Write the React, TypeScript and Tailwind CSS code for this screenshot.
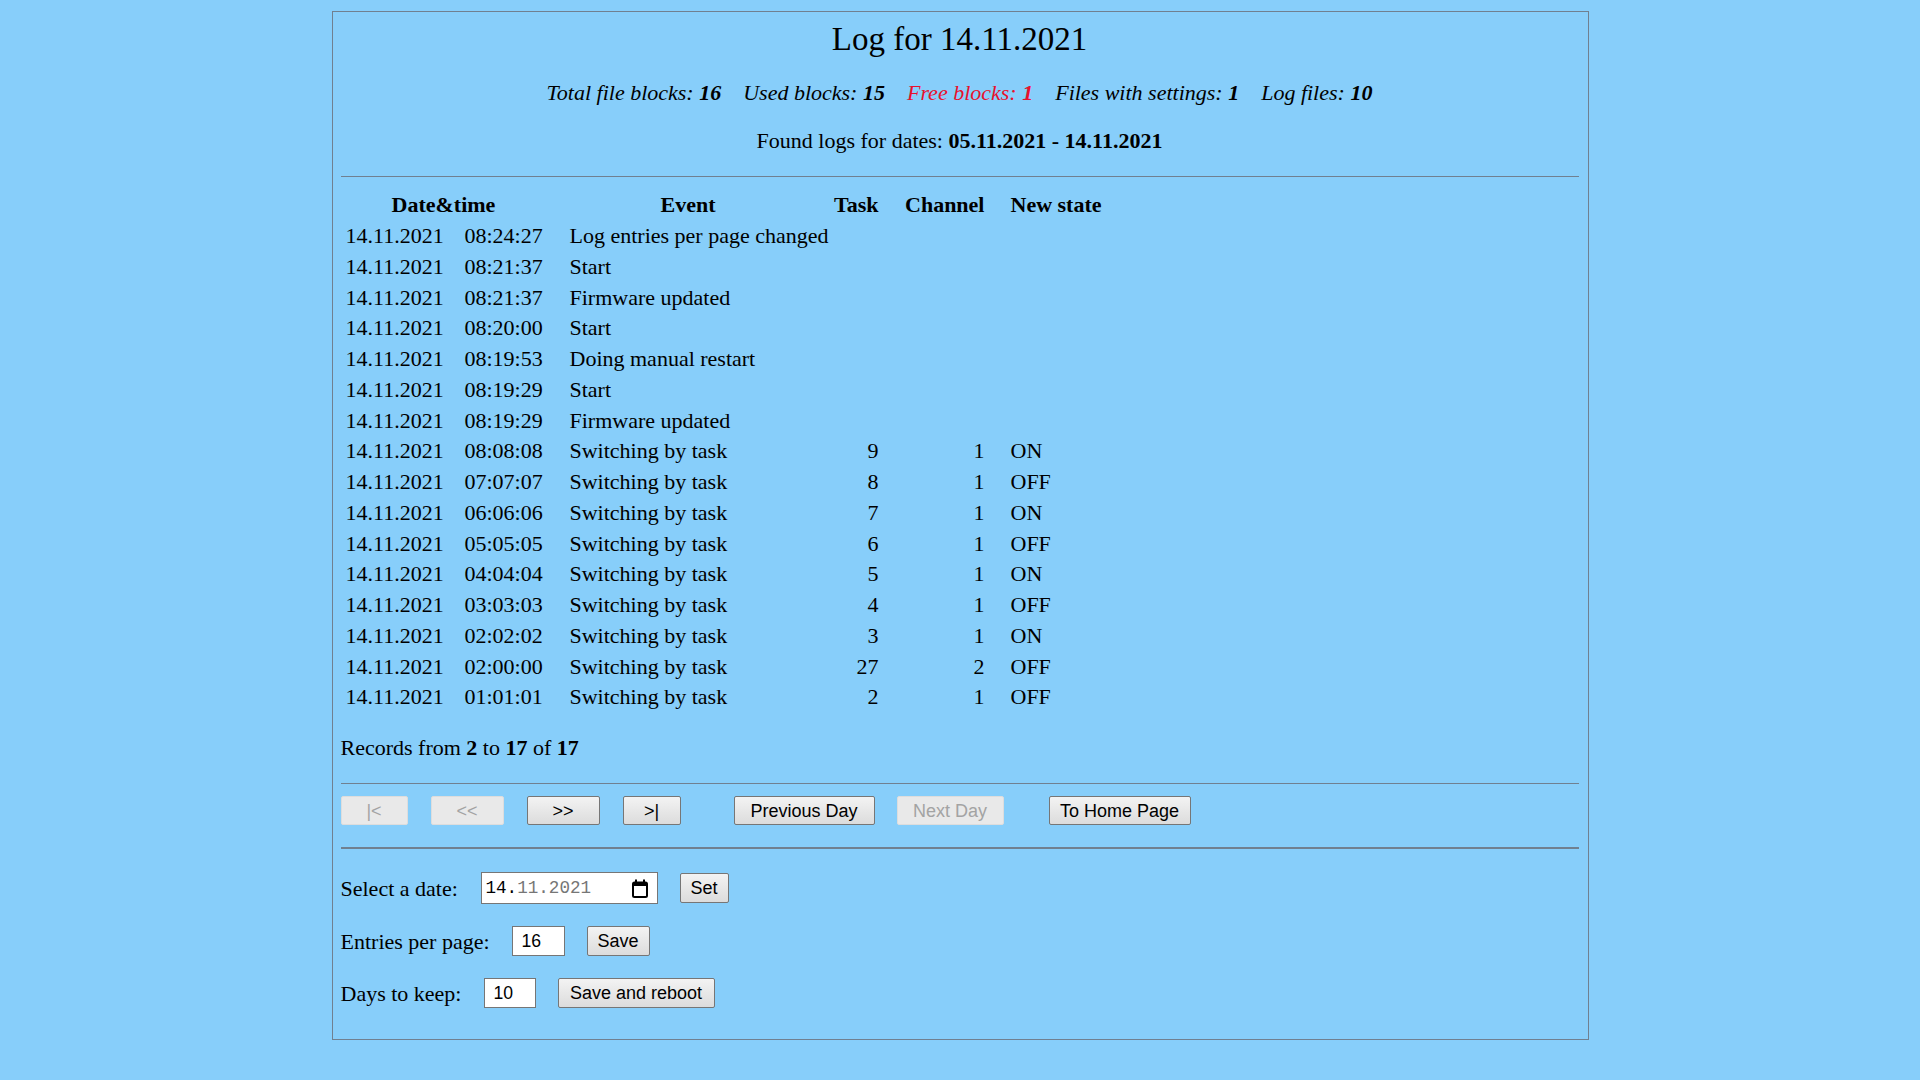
import React from "react";

const rows: [string, string, string, string, string, string][] = [
  ["14.11.2021", "08:24:27", "Log entries per page changed", "", "", ""],
  ["14.11.2021", "08:21:37", "Start", "", "", ""],
  ["14.11.2021", "08:21:37", "Firmware updated", "", "", ""],
  ["14.11.2021", "08:20:00", "Start", "", "", ""],
  ["14.11.2021", "08:19:53", "Doing manual restart", "", "", ""],
  ["14.11.2021", "08:19:29", "Start", "", "", ""],
  ["14.11.2021", "08:19:29", "Firmware updated", "", "", ""],
  ["14.11.2021", "08:08:08", "Switching by task", "9", "1", "ON"],
  ["14.11.2021", "07:07:07", "Switching by task", "8", "1", "OFF"],
  ["14.11.2021", "06:06:06", "Switching by task", "7", "1", "ON"],
  ["14.11.2021", "05:05:05", "Switching by task", "6", "1", "OFF"],
  ["14.11.2021", "04:04:04", "Switching by task", "5", "1", "ON"],
  ["14.11.2021", "03:03:03", "Switching by task", "4", "1", "OFF"],
  ["14.11.2021", "02:02:02", "Switching by task", "3", "1", "ON"],
  ["14.11.2021", "02:00:00", "Switching by task", "27", "2", "OFF"],
  ["14.11.2021", "01:01:01", "Switching by task", "2", "1", "OFF"],
];

const btnBase =
  "flex items-center justify-center shrink-0 rounded-[2px] border font-['Liberation_Sans',Arial,sans-serif] text-[18px] leading-none";
const btnOn =
  btnBase + " border-[#767676] bg-linear-to-b from-[#f3f3f3] to-[#dcdcdc] text-black";
const btnOff = btnBase + " border-[#dddddd] bg-[#e9e9e9] text-[#a3a3a3]";

function CalendarIcon() {
  return (
    <svg width="16" height="19" viewBox="0 0 16 19" aria-hidden="true">
      <rect x="1" y="3.5" width="14" height="14.5" rx="1.5" fill="none" stroke="#000" strokeWidth="2" />
      <rect x="1" y="3" width="14" height="4" fill="#000" />
      <rect x="3" y="0.5" width="2" height="3" fill="#000" />
      <rect x="11" y="0.5" width="2" height="3" fill="#000" />
    </svg>
  );
}

export default function App() {
  return (
    <div className="min-h-screen bg-[#87cefa] pt-[11px] font-['Liberation_Serif','Times_New_Roman',serif] text-black">
      <div className="mx-auto w-[1257px] border border-[#708090] pl-[8px] pr-[9px] pb-[31px]">
        <h1 className="mt-[8px] text-center text-[33px] leading-[38px] font-normal">Log for 14.11.2021</h1>

        <div className="mt-[22px] flex justify-center gap-[22px] text-[22px] leading-[25px] italic">
          <span>
            Total file blocks: <b>16</b>
          </span>
          <span>
            Used blocks: <b>15</b>
          </span>
          <span className="text-[#e8112d]">
            Free blocks: <b>1</b>
          </span>
          <span>
            Files with settings: <b>1</b>
          </span>
          <span>
            Log files: <b>10</b>
          </span>
        </div>

        <div className="mt-[23px] text-center text-[22px] leading-[25px]">
          Found logs for dates: <b>05.11.2021 - 14.11.2021</b>
        </div>

        <div className="mt-[23px] h-px bg-[#708090]" />

        <div className="mt-[11px] grid grid-cols-[118px_107px_265px_48px_106px_1fr] text-[22px]">
          <div className="col-span-2 h-[33px] pl-[51px] font-bold leading-[33px]">Date&amp;time</div>
          <div className="h-[33px] pl-[95px] font-bold leading-[33px]">Event</div>
          <div className="h-[33px] text-right font-bold leading-[33px]">Task</div>
          <div className="h-[33px] text-right font-bold leading-[33px]">Channel</div>
          <div className="h-[33px] pl-[26px] font-bold leading-[33px]">New state</div>
          {rows.map((r, i) => (
            <React.Fragment key={i}>
              <div className="h-[30.75px] pl-[5px] leading-[30.75px] whitespace-nowrap">{r[0]}</div>
              <div className="h-[30.75px] pl-[6px] leading-[30.75px] whitespace-nowrap">{r[1]}</div>
              <div className="h-[30.75px] pl-[4px] leading-[30.75px] whitespace-nowrap">{r[2]}</div>
              <div className="h-[30.75px] text-right leading-[30.75px]">{r[3]}</div>
              <div className="h-[30.75px] text-right leading-[30.75px]">{r[4]}</div>
              <div className="h-[30.75px] pl-[26px] leading-[30.75px]">{r[5]}</div>
            </React.Fragment>
          ))}
        </div>

        <div className="mt-[22px] text-[22px] leading-[25px]">
          Records from <b>2</b> to <b>17</b> of <b>17</b>
        </div>

        <div className="mt-[23px] h-px bg-[#708090]" />

        <div className="mt-[12px] flex h-[29px] items-stretch">
          <div className={btnOff + " w-[67px]"}>|&lt;</div>
          <div className={btnOff + " ml-[23px] w-[73px]"}>&lt;&lt;</div>
          <div className={btnOn + " ml-[23px] w-[73px]"}>&gt;&gt;</div>
          <div className={btnOn + " ml-[23px] w-[58px]"}>&gt;|</div>
          <div className={btnOn + " ml-[53px] w-[141px]"}>Previous Day</div>
          <div className={btnOff + " ml-[22px] w-[107px]"}>Next Day</div>
          <div className={btnOn + " ml-[45px] w-[142px]"}>To Home Page</div>
        </div>

        <div className="mt-[22px] h-[2px] bg-[#708090]" />

        <div className="mt-[23px] flex h-[32px] items-center text-[22px]">
          <span className="w-[140px] shrink-0 leading-[25px]">Select a date:</span>
          <div className="flex h-[32px] w-[177px] items-center justify-between border border-[#767676] bg-white pl-[4px] pr-[9px] font-['Liberation_Mono','Courier_New',monospace] text-[17.6px]">
            <span>
              <span className="text-black">14.</span>
              <span className="text-[#767676]">11.2021</span>
            </span>
            <CalendarIcon />
          </div>
          <div className={btnOn + " ml-[22px] h-[30px] w-[49px]"}>Set</div>
        </div>

        <div className="mt-[22px] flex h-[30px] items-center text-[22px]">
          <span className="w-[171px] shrink-0 leading-[25px]">Entries per page:</span>
          <div className="flex h-[30px] w-[53px] items-center border border-[#767676] bg-white pl-[9px] font-['Liberation_Sans',Arial,sans-serif] text-[17.6px]">
            16
          </div>
          <div className={btnOn + " ml-[22px] h-[30px] w-[63px]"}>Save</div>
        </div>

        <div className="mt-[22px] flex h-[30px] items-center text-[22px]">
          <span className="w-[143px] shrink-0 leading-[25px]">Days to keep:</span>
          <div className="flex h-[30px] w-[52px] items-center border border-[#767676] bg-white pl-[9px] font-['Liberation_Sans',Arial,sans-serif] text-[17.6px]">
            10
          </div>
          <div className={btnOn + " ml-[22px] h-[30px] w-[157px]"}>Save and reboot</div>
        </div>
      </div>
    </div>
  );
}
